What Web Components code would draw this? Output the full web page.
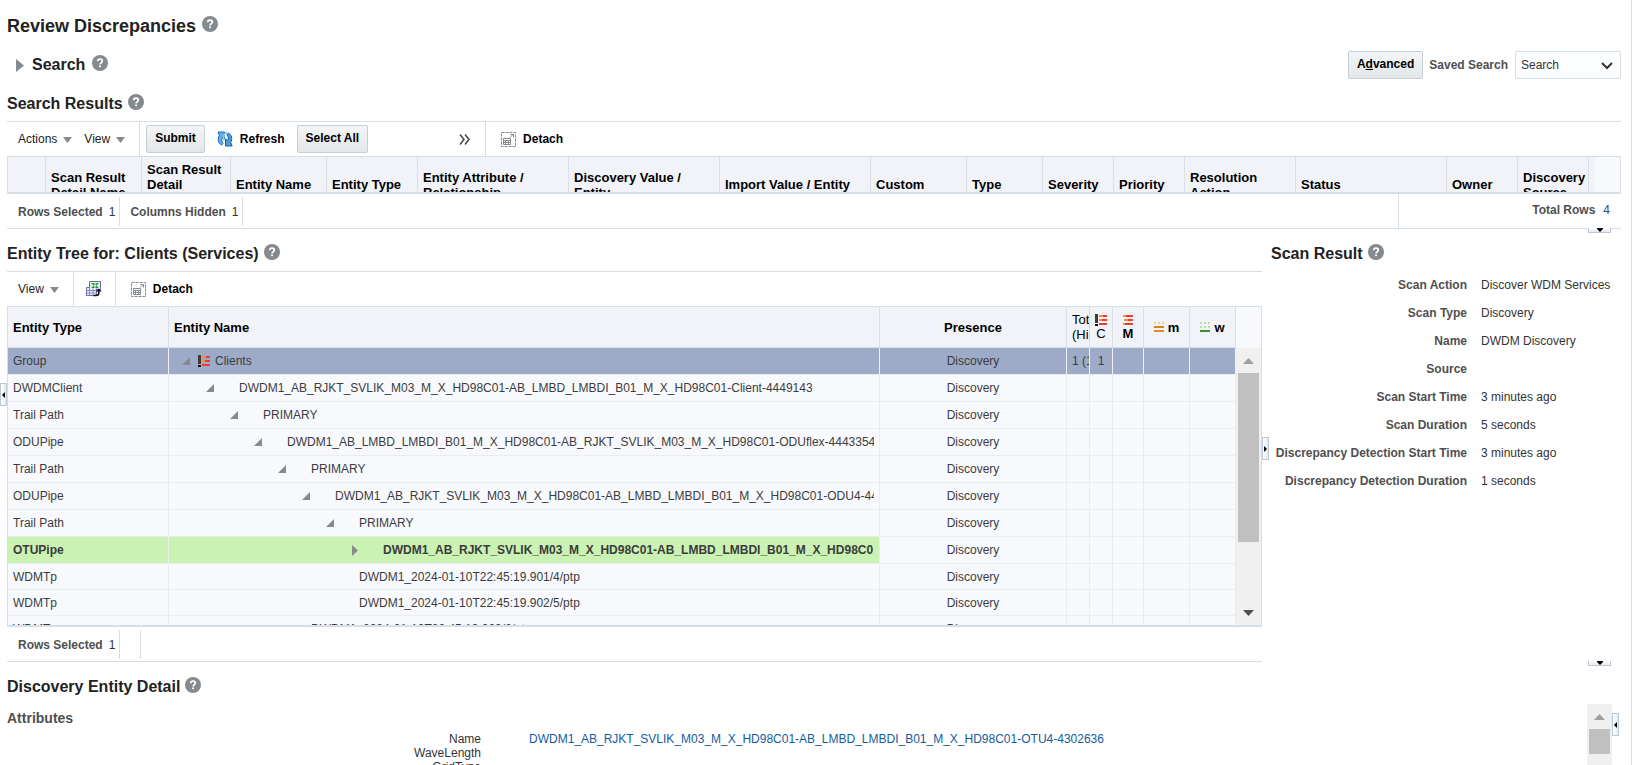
<!DOCTYPE html>
<html lang="en">
<head>
<meta charset="utf-8">
<title>Review Discrepancies</title>
<style>
  html, body { height: 100%; }
  body {
    margin: 0;
    overflow: hidden;
    background: #fff;
    font: 12px/14px "Liberation Sans", Arial, sans-serif;
    color: #333;
    --line: #d6dfe6;
    --head: #f1f3f8;
    --cell: #f8f9fd;
    --grid: #ebeced;
    --muted: #4f4f4f;
    --icon: #858a8e;
  }
</style>
</head>
<body>
<review-page>
  <panel-title slot="title" level="1">Review Discrepancies</panel-title>
  <search-bar slot="search"></search-bar>
  <results-panel slot="results"></results-panel>
  <tree-panel slot="tree"></tree-panel>
  <scan-result slot="scan"></scan-result>
  <entity-detail slot="detail"></entity-detail>
</review-page>

<script>
const define = (name, html, setup) => {
  const template = document.createElement('template');
  template.innerHTML = html;
  customElements.define(name, class extends HTMLElement {
    constructor() {
      super();
      this.attachShadow({ mode: 'open' }).append(template.content.cloneNode(true));
    }
    connectedCallback() {
      if (setup) setup(this, this.shadowRoot);
    }
  });
};

/* ---------- small parts ---------- */

define('help-icon', `
  <style>
    :host { display: block; width: 16px; height: 16px; flex: none; }
    button { display: block; padding: 0; border: 0; background: none; }
    svg { display: block; }
  </style>
  <button aria-label="Help"><svg width="16" height="16" viewBox="0 0 16 16">
    <circle cx="8" cy="8" r="8" fill="#858a8e"/>
    <path d="M5.700 6.300C5.700 4.800 6.700 4.100 8 4.100s2.300.8 2.300 2c0 1.700-2.200 1.700-2.200 3.300" fill="none" stroke="#fff" stroke-width="1.700"/>
    <rect x="7.200" y="10.400" width="1.800" height="1.800" fill="#fff"/>
  </svg></button>`);

define('panel-title', `
  <style>
    :host { display: flex; align-items: flex-start; gap: 5px; height: 18px; color: #222; }
    h2 { margin: 0; font-size: 16px; line-height: 20px; font-weight: bold; white-space: nowrap; }
    :host([level="1"]) { gap: 6px; height: 20px; }
    :host([level="1"]) h2 { font-size: 18px; }
  </style>
  <h2><slot></slot></h2><help-icon></help-icon>`);

define('push-button', `
  <style>
    :host { display: block; flex: none; }
    button {
      display: block; height: 28px; padding: 0 8px 2px; border: 1px solid #c4ced7; border-radius: 2px;
      background: linear-gradient(#f3f5f6, #e3e7ea); color: #000;
      font: bold 12px/14px "Liberation Sans", Arial, sans-serif; white-space: nowrap;
    }
  </style>
  <button><slot></slot></button>`);

define('menu-button', `
  <style>
    :host { display: block; }
    button {
      display: flex; align-items: center; gap: 6px; padding: 0; border: 0; background: none;
      font: 12px/14px "Liberation Sans", Arial, sans-serif; color: #222;
    }
    svg { display: block; margin-top: 2px; }
  </style>
  <button aria-haspopup="menu"><slot></slot><svg width="9" height="6"><path d="M0 0h9L4.500 6z" fill="#858a8e"/></svg></button>`);

const glyphs = {
  refresh: `<svg width="16" height="16" viewBox="0 0 16 16">
    <path d="M1 1h6.500v7L5.500 6.500c-1 1.500-1 4 .5 6L4.500 14C1.500 12.500.3 8 2.300 4.500z" fill="#5fb0ea" stroke="#1d68ad"/>
    <path d="M15.200 15H8.500V8l2.200 1.500c1-1.500.8-4-.7-6L11.500 2c3 1.500 4.200 6 2.200 9.500z" fill="#4a9bdc" stroke="#1a5c9c"/>
    <path d="M6.800 9.500C6.300 5.500 7.500 2 10.500 1.200" fill="none" stroke="#8ccbf3" stroke-width="1.500"/>
  </svg>`,
  detach: `<svg width="15" height="15" viewBox="0 0 15 15" fill="none" stroke="#858a8e">
    <path d="M.5 .5h14v14H.5z" stroke-dasharray="3 1"/>
    <path d="M2.500 6.500h7v6h-7zM2.500 8.500h7M2.500 10.500h7M4.500 8v5M7.500 8v5"/>
    <path d="M9 5.500l3-3M9.500 2.500h3v3"/>
  </svg>`,
  excel: `<svg width="16" height="16" viewBox="0 0 16 16">
    <path d="M3.500 .5h11v8h-11z" fill="#e9f3e4" stroke="#6a6aa8"/>
    <path d="M.5 6.500h10v8H.5z" fill="#e8ecfa" stroke="#6a6aa8"/>
    <path d="M.5 9.500h10M.5 12h10M3.500 6.500v8M7 6.500v8" stroke="#8a8cc4" fill="none"/>
    <path d="M4 1.500h9.500v6H4z" fill="#e9f6e4"/>
    <path d="M5 2h3l5 5h-3zM13 2h-3L5 7h3z" fill="#2f9a3c"/>
    <path d="M7.500 14.500H10c2 0 2.800-1 2.800-2.500V9.500" fill="none" stroke="#111" stroke-width="1.600"/>
    <path d="M9.800 10.500L12.800 7.500l3 3z" fill="#111"/>
  </svg>`,
};

define('icon-button', `
  <style>
    :host { display: block; }
    button {
      display: flex; align-items: center; gap: 7px; padding: 0; border: 0; background: none;
      font: bold 12px/14px "Liberation Sans", Arial, sans-serif; color: #000;
    }
    :host([label]) button { gap: 0; }
    svg { display: block; }
  </style>
  <button><span></span><slot></slot></button>`,
  (host, root) => {
    root.querySelector('span').innerHTML = glyphs[host.getAttribute('icon')];
    const label = host.getAttribute('label');
    if (label) root.querySelector('button').setAttribute('aria-label', label);
  });

define('tool-bar', `
  <style>
    :host { display: flex; height: 34px; margin-top: 9px; border-top: 1px solid var(--line); }
  </style>
  <slot></slot>`);

define('tool-group', `
  <style>
    :host { display: flex; align-items: center; gap: 12px; padding: 0 14px 0 11px; border-right: 1px solid var(--line); }
    :host([last]) { border: 0; padding-left: 15px; }
    :host([even]) { padding: 0 13px 0 12px; }
    :host([wide]) { padding: 0 13px 0 6px; }
  </style>
  <slot></slot>`);

define('status-item', `
  <style>
    :host { display: flex; align-items: center; gap: 6px; margin: 3px 0 2px; padding: 0 4px 0 10px; border-right: 1px solid var(--line); white-space: nowrap; }
    b { color: var(--muted); }
    span { color: #333; }
    :host([blue]) span { color: #2a4d68; }
    :host([blue]) { box-sizing: border-box; width: 223px; gap: 8px; margin: 0 0 0 auto; padding: 0 11px 3px 0; justify-content: flex-end; border-right: 0; border-left: 1px solid var(--line); }
    :host([empty]) { padding: 0; width: 20px; gap: 0; }
  </style>
  <b><slot></slot></b><span><slot name="count"></slot></span>`);

define('status-bar', `
  <style>
    :host { display: flex; height: 34px; padding-left: 1px; border-bottom: 1px solid var(--line); }
  </style>
  <slot></slot>`);

/* Collapse handle of a splitter; "side" says which edge it hangs on. */
define('split-handle', `
  <style>
    :host { display: block; flex: none; }
    button {
      box-sizing: border-box; display: grid; place-items: center; width: 7px; height: 23px; padding: 0;
      border: 1px solid #bcc9d5; background: linear-gradient(90deg, #fff, #e6eaee);
    }
    svg { display: block; }
    .left, .right { display: none; }
    :host([side="left"]) .left, :host([side="right"]) .right { display: block; }
    .down { display: none; }
    :host([side="down"]) .down { display: block; }
    :host([side="down"]) button { width: 23px; height: 5px; border-top: 0; background: linear-gradient(#fff, #e6eaee); }
  </style>
  <button aria-label="Collapse pane">
    <svg class="left" width="3" height="6"><path d="M3 0v6L0 3z"/></svg>
    <svg class="right" width="3" height="6"><path d="M0 0v6L3 3z"/></svg>
    <svg class="down" width="6" height="4"><path d="M0 0h6v1L3 4 0 1z"/></svg>
  </button>`);

define('scroll-rail', `
  <style>
    :host { display: flex; flex-direction: column; width: 25px; background: #f0f0f0; flex: none; }
    .cap { height: 25px; display: grid; place-items: center; flex: none; }
    .thumb { margin: 0 2px; background: #c0c0c0; height: var(--thumb, 25px); flex: none; }
    .end { margin-top: auto; }
    :host([open]) .end { display: none; }
    svg { display: block; }
  </style>
  <div class="cap"><svg width="11" height="6"><path d="M0 6h11L5.500 0z" fill="#a0a0a0"/></svg></div>
  <div class="thumb"></div>
  <div class="cap end"><svg width="11" height="6"><path d="M0 0h11L5.500 6z" fill="#505050"/></svg></div>`);

/* ---------- search bar ---------- */

define('search-bar', `
  <style>
    :host { display: flex; align-items: center; height: 28px; margin-top: 15px; }
    .fold { padding: 0; border: 0; background: none; margin: 0 8px 0 9px; }
    .fold svg, .pick svg { display: block; }
    panel-title { gap: 7px; height: 20px; }
    label { margin: 0 7px 0 6px; font-weight: bold; color: var(--muted); }
    push-button { margin-left: auto; }
    .pick { position: relative; }
    .pick svg { position: absolute; right: 8px; top: 11px; pointer-events: none; }
    select {
      display: block; box-sizing: border-box; width: 106px; height: 28px; padding: 0 24px 0 5px;
      border: 1px solid var(--line); border-radius: 2px; background: #fcfdfe; appearance: none;
      font: 12px/14px "Liberation Sans", Arial, sans-serif; color: #333;
    }
  </style>
  <button class="fold" aria-label="Expand search"><svg width="8" height="13"><path d="M0 0v13L8 6.500z" fill="#858a8e"/></svg></button>
  <panel-title>Search</panel-title>
  <push-button>A<u>d</u>vanced</push-button>
  <label for="saved">Saved Search</label>
  <span class="pick">
    <select id="saved"><option>Search</option></select>
    <svg width="12" height="8"><path d="M1 1l5 5 5-5" fill="none" stroke="#333" stroke-width="2"/></svg>
  </span>`);

/* ---------- search results ---------- */

const resultColumns = [
  ['', 38], ['Scan Result<br>Detail Name', 96], ['Scan Result<br>Detail', 89, 'three'], ['Entity Name', 96],
  ['Entity Type', 91], ['Entity Attribute /<br>Relationship', 151], ['Discovery Value /<br>Entity', 151],
  ['Import Value / Entity', 151], ['Custom', 96], ['Type', 76], ['Severity', 71], ['Priority', 71],
  ['Resolution<br>Action', 111], ['Status', 151], ['Owner', 71], ['Discovery<br>Source', 71],
];

define('results-panel', `
  <style>
    :host { display: block; position: relative; margin-top: 15px; }
    .view { display: flex; height: 35px; overflow: hidden; border: 1px solid var(--line); border-bottom-width: 2px; background: var(--cell); }
    .cols { flex: 1; min-width: 0; overflow: hidden; }
    .stub { width: 25px; flex: none; }
    table { table-layout: fixed; width: 100%; min-width: 1588px; border-collapse: separate; border-spacing: 0; background: var(--head); }
    th { box-sizing: border-box; height: 55px; padding: 0 5px; border-right: 1px solid var(--line); text-align: left; font: bold 13px/15px "Liberation Sans", Arial, sans-serif; color: #000; white-space: nowrap; }
    th.three { padding-bottom: 15px; }
    .rest { border: 0; }
    .more { margin: 0 1px 0 79px; padding: 0; border: 0; background: none; }
    .more svg { display: block; }
    .hang { position: absolute; right: 10px; bottom: -4px; }
  </style>
  <panel-title>Search Results</panel-title>
  <tool-bar>
    <tool-group><menu-button>Actions</menu-button><menu-button>View</menu-button></tool-group>
    <tool-group wide>
      <push-button>Submit</push-button>
      <icon-button icon="refresh">Refresh</icon-button>
      <push-button>Select All</push-button>
      <button class="more" aria-label="More tools"><svg width="12" height="11" fill="none" stroke="#444" stroke-width="1.500"><path d="M1 .5l4 5-4 5M6 .5l4 5-4 5"/></svg></button>
    </tool-group>
    <tool-group last><icon-button icon="detach">Detach</icon-button></tool-group>
  </tool-bar>
  <div class="view">
    <div class="cols"><table><thead><tr></tr></thead></table></div>
    <div class="stub"></div>
  </div>
  <status-bar>
    <status-item>Rows Selected<span slot="count">1</span></status-item>
    <status-item>Columns Hidden<span slot="count">1</span></status-item>
    <status-item blue>Total Rows<span slot="count">4</span></status-item>
  </status-bar>
  <split-handle class="hang" side="down"></split-handle>`,
  (host, root) => {
    root.querySelector('tr').innerHTML = resultColumns
      .map(([text, width, kind]) => `<th scope="col" class="${kind || ''}" style="width:${width}px">${text}</th>`)
      .join('') + '<th class="rest"></th>';
  });

/* ---------- entity tree ---------- */

/* type, depth, name, toggle state, row kind */
const treeRows = [
  ['Group', 0, 'Clients', 'open', 'selected'],
  ['DWDMClient', 1, 'DWDM1_AB_RJKT_SVLIK_M03_M_X_HD98C01-AB_LMBD_LMBDI_B01_M_X_HD98C01-Client-4449143', 'open'],
  ['Trail Path', 2, 'PRIMARY', 'open'],
  ['ODUPipe', 3, 'DWDM1_AB_LMBD_LMBDI_B01_M_X_HD98C01-AB_RJKT_SVLIK_M03_M_X_HD98C01-ODUflex-4443354', 'open'],
  ['Trail Path', 4, 'PRIMARY', 'open'],
  ['ODUPipe', 5, 'DWDM1_AB_RJKT_SVLIK_M03_M_X_HD98C01-AB_LMBD_LMBDI_B01_M_X_HD98C01-ODU4-44', 'open'],
  ['Trail Path', 6, 'PRIMARY', 'open'],
  ['OTUPipe', 7, 'DWDM1_AB_RJKT_SVLIK_M03_M_X_HD98C01-AB_LMBD_LMBDI_B01_M_X_HD98C0', 'shut', 'current'],
  ['WDMTp', 6, 'DWDM1_2024-01-10T22:45:19.901/4/ptp', '', 'leaf'],
  ['WDMTp', 6, 'DWDM1_2024-01-10T22:45:19.902/5/ptp', '', 'leaf'],
  ['WDMTp', 4, 'DWDM1_2024-01-10T22:45:19.903/6/ptp', '', 'leaf'],
];

const bars = `<path d="M0 0h4v2H0zM1 4h5v2H1zM0 8h3v2H0z" fill="#f98a3c"/><path d="M3 0h7v2H3zM5 4h5v2H5zM2 8h8v2H2z" fill="#f23a30"/>`;
const icons = {
  critical: `<svg width="12" height="12" viewBox="0 0 12 12"><path d="M0 0h3v9H0z" fill="#3c3c3c"/><path d="M0 10h3v2H0z" fill="#111"/><path d="M4 1h8v2H4zM4 5h8v2H4zM4 9h8v2H4z" fill="#f23a30"/><path d="M4 1h4v2H4zM4 5h3v2H4z" fill="#f98a3c"/></svg>`,
  major: `<svg width="10" height="10" viewBox="0 0 10 10">${bars}</svg>`,
  minor: `<svg width="10" height="10" viewBox="0 0 10 10"><path d="M0 0h2v2H0zM4 0h2v2H4zM8 0h2v2H8z" fill="#fbc78e"/><path d="M0 4h10v2H0z" fill="#d98218"/><path d="M0 8h10v2H0z" fill="#e08a2c"/></svg>`,
  warning: `<svg width="10" height="10" viewBox="0 0 10 10"><path d="M0 0h2v2H0zM4 0h2v2H4zM8 0h2v2H8zM0 4h2v2H0zM4 4h2v2H4zM8 4h2v2H8z" fill="#b9dfa8"/><path d="M0 8h10v2H0z" fill="#3a8f35"/></svg>`,
};

define('tree-panel', `
  <style>
    :host { display: block; min-width: 0; }
    .view { display: flex; height: 318px; overflow: hidden; border: 1px solid var(--line); border-bottom-width: 2px; background: var(--cell); }
    .cols { flex: 1; min-width: 0; overflow: hidden; }
    .side { display: flex; flex-direction: column; }
    .stub { height: 41px; flex: none; }
    scroll-rail { flex: 1; --thumb: 169px; }
    table { table-layout: fixed; width: 100%; border-collapse: separate; border-spacing: 0; }
    th, td { box-sizing: border-box; padding: 0 5px; text-align: left; white-space: nowrap; overflow: hidden; }
    th { height: 41px; background: var(--head); border-right: 1px solid var(--line); border-bottom: 1px solid var(--line); font: bold 13px/15px "Liberation Sans", Arial, sans-serif; color: #000; }
    td { height: 27px; border-right: 1px solid var(--grid); border-bottom: 1px solid var(--grid); color: #3c3c3c; }
    tr.leaf td { height: 26px; }
    .mid { text-align: center; }
    th.plain { font-weight: normal; }
    th svg { display: block; }
    th.stack svg { margin: 0 auto; }
    .major svg { padding: 1px 0; }
    .pair { display: flex; align-items: center; justify-content: center; gap: 4px; }
    .cut { padding-right: 0; }
    .selected td { background: #9dabc9; border-right-color: #eef0f3; }
    .current td:nth-child(-n+2) { background: #c9f2b3; font-weight: bold; }
    .node { display: flex; align-items: center; overflow: hidden; }
    .toggle { display: flex; align-items: center; width: 8px; height: 14px; margin-right: 8px; padding: 0; border: 0; background: none; flex: none; }
    .pic { width: 12px; margin-right: 5px; flex: none; }
    .pic svg, .toggle svg { display: block; }
  </style>
  <panel-title>Entity Tree for: Clients (Services)</panel-title>
  <tool-bar>
    <tool-group><menu-button>View</menu-button></tool-group>
    <tool-group even><icon-button icon="excel" label="Export to Excel"></icon-button></tool-group>
    <tool-group last><icon-button icon="detach">Detach</icon-button></tool-group>
  </tool-bar>
  <div class="view">
    <div class="cols">
      <table>
        <colgroup><col style="width:161px"><col><col style="width:187px"><col style="width:23px"><col style="width:23px"><col style="width:31px"><col style="width:46px"><col style="width:46px"></colgroup>
        <thead><tr>
          <th scope="col">Entity Type</th><th scope="col">Entity Name</th><th scope="col" class="mid">Presence</th>
          <th scope="col" class="plain cut">Tot<br>(Hi</th>
          <th scope="col" class="plain mid stack">${icons.critical}C</th>
          <th scope="col" class="mid stack major">${icons.major}M</th>
          <th scope="col"><span class="pair">${icons.minor}m</span></th>
          <th scope="col"><span class="pair">${icons.warning}w</span></th>
        </tr></thead>
        <tbody></tbody>
      </table>
    </div>
    <div class="side"><div class="stub"></div><scroll-rail></scroll-rail></div>
  </div>
  <status-bar>
    <status-item>Rows Selected<span slot="count">1</span></status-item>
    <status-item empty></status-item>
  </status-bar>`,
  (host, root) => {
    const marks = {
      open: '<button class="toggle" aria-label="Collapse"><svg width="8" height="8"><path d="M8 0v8H0z" fill="#858a8e"/></svg></button>',
      shut: '<button class="toggle" aria-label="Expand"><svg width="8" height="11"><path d="M2 0v11l6-5.500z" fill="#858a8e"/></svg></button>',
      '': '<span class="toggle"></span>',
    };
    root.querySelector('tbody').innerHTML = treeRows.map(([type, depth, name, state, kind], i) => `
      <tr class="${kind || ''}"><td>${type}</td>
      <td><div class="node" style="padding-left:${8 + depth * 24}px">${marks[state]}<span class="pic">${i ? '' : icons.critical}</span><span>${name}</span></div></td>
      <td class="mid">Discovery</td><td class="cut">${i ? '' : '1 (1'}</td><td class="mid">${i ? '' : '1'}</td><td></td><td></td><td></td></tr>`).join('');
  });

/* ---------- scan result ---------- */

const scanFields = [
  ['Scan Action', 'Discover WDM Services'], ['Scan Type', 'Discovery'], ['Name', 'DWDM Discovery'], ['Source', ''],
  ['Scan Start Time', '3 minutes ago'], ['Scan Duration', '5 seconds'],
  ['Discrepancy Detection Start Time', '3 minutes ago'], ['Discrepancy Detection Duration', '1 seconds'],
];

define('scan-result', `
  <style>
    :host { display: block; padding-left: 2px; }
    dl { display: grid; grid-template-columns: 196px 1fr; grid-auto-rows: 28px; column-gap: 14px; align-items: center; margin: 9px 0 0; white-space: nowrap; }
    dt { text-align: right; font-weight: bold; color: var(--muted); }
    dd { margin: 0; }
  </style>
  <panel-title>Scan Result</panel-title>
  <dl></dl>`,
  (host, root) => {
    root.querySelector('dl').innerHTML = scanFields.map(([k, v]) => `<dt>${k}</dt><dd>${v}</dd>`).join('');
  });

/* ---------- entity detail ---------- */

define('entity-detail', `
  <style>
    :host { display: flex; flex-direction: column; min-height: 0; margin-top: 15px; }
    .body { display: flex; flex: 1; min-height: 0; margin-top: 9px; overflow: hidden; }
    .main { flex: 1; padding-top: 6px; min-width: 0; }
    h3 { margin: 0 0 6px; font-size: 14px; line-height: 16px; color: var(--muted); }
    dl { display: grid; grid-template-columns: 474px 1fr; grid-auto-rows: 14px; column-gap: 48px; margin: 0; }
    dt { text-align: right; }
    dd { margin: 0; }
    a { color: #145c9e; text-decoration: none; }
    split-handle { margin: 9px 2px 0 0; }
  </style>
  <panel-title>Discovery Entity Detail</panel-title>
  <div class="body">
    <div class="main">
      <h3>Attributes</h3>
      <dl>
        <dt>Name</dt><dd><a href="#entity">DWDM1_AB_RJKT_SVLIK_M03_M_X_HD98C01-AB_LMBD_LMBDI_B01_M_X_HD98C01-OTU4-4302636</a></dd>
        <dt>WaveLength</dt><dd></dd>
        <dt>GridType</dt><dd></dd>
      </dl>
    </div>
    <scroll-rail open></scroll-rail>
    <split-handle side="left"></split-handle>
  </div>`);

/* ---------- page frame ---------- */

define('review-page', `
  <style>
    :host { display: flex; flex-direction: column; box-sizing: border-box; height: 100vh; padding: 16px 10px 0 0; border-right: 1px solid var(--line); overflow: hidden; }
    .pad { padding-left: 7px; }
    .split { position: relative; display: grid; grid-template-columns: 7px minmax(0, 1fr) 7px 352px; margin-top: 15px; flex: none; }
    .left { margin-top: 139px; }
    .mid { margin-top: 193px; }
    .low { display: flex; flex-direction: column; flex: 1; min-height: 0; }
    .low ::slotted(*) { flex: 1; }
    .hang { position: absolute; right: 10px; bottom: -4px; }
  </style>
  <div class="pad">
    <slot name="title"></slot>
    <slot name="search"></slot>
    <slot name="results"></slot>
  </div>
  <div class="split">
    <split-handle class="left" side="left"></split-handle>
    <slot name="tree"></slot>
    <split-handle class="mid" side="right"></split-handle>
    <slot name="scan"></slot>
    <split-handle class="hang" side="down"></split-handle>
  </div>
  <div class="pad low"><slot name="detail"></slot></div>`);
</script>
</body>
</html>
